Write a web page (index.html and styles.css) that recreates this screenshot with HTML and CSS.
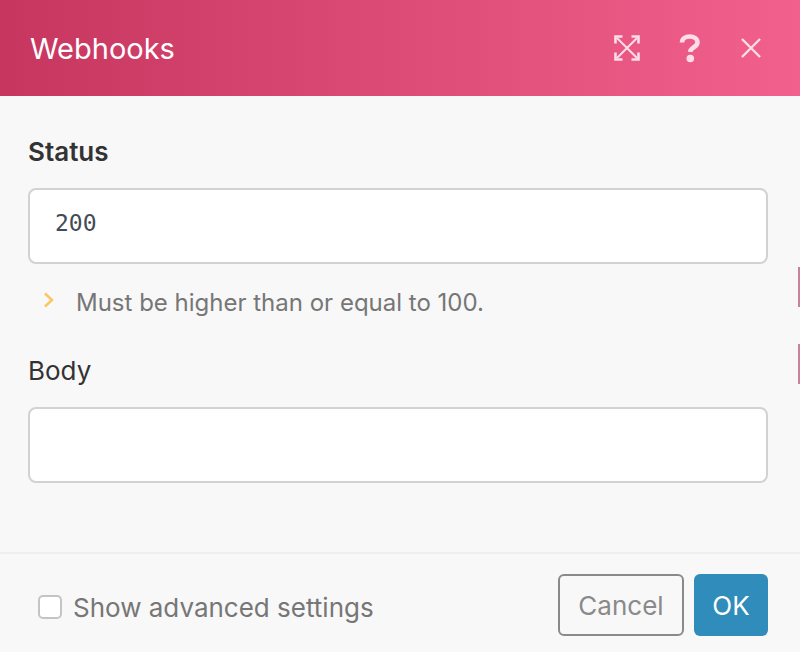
FILE: index.html
```html
<!DOCTYPE html>
<html lang="en">
<head>
<meta charset="utf-8">
<title>Webhooks</title>
<link rel="stylesheet" href="styles.css">
</head>
<body>
<div class="dialog">
  <header class="header">
    <h1 class="title">Webhooks</h1>
    <div class="tools">
      <svg class="icon" width="26" height="26" viewBox="0 0 26 26" fill="none" stroke="#fcdde8" stroke-width="2.6">
        <path d="M1.5 8.5V1.5H8.5M17.5 1.5H24.5V8.500M24.500 17.500V24.500H17.500M8.500 24.500H1.500V17.500"/>
        <path stroke-width="2" d="M3 3L23 23M23 3L3 23"/>
      </svg>
      <svg class="icon" width="22" height="30" viewBox="0 0 22 30" fill="none">
        <path d="M3 9.500C3 5.500 6.500 3.500 10.500 3.500C15 3.500 18.500 5.800 18.500 9.500C18.500 14 13 14 11.500 17.500V19" stroke="#fcdde8" stroke-width="4.600"/>
        <circle cx="11.300" cy="25.500" r="3.800" fill="#fcdde8"/>
      </svg>
      <svg class="icon" width="20" height="20" viewBox="0 0 20 20" fill="none" stroke="#fcdde8" stroke-width="2.400">
        <path d="M1 1L19 19M19 1L1 19"/>
      </svg>
    </div>
  </header>
  <main class="content">
    <section class="field">
      <label class="label label-strong">Status</label>
      <div class="input input-mono">200</div>
      <p class="hint">
        <svg class="chevron" width="12" height="16" viewBox="0 0 12 16" fill="none" stroke="#fdc55d" stroke-width="2.400"><path d="M2 1.500L9 8L2 14.500"/></svg>
        <span>Must be higher than or equal to 100.</span>
      </p>
    </section>
    <section class="field field-body">
      <label class="label">Body</label>
      <div class="input"></div>
    </section>
  </main>
  <footer class="footer">
    <label class="check">
      <span class="box"></span>
      <span>Show advanced settings</span>
    </label>
    <div class="actions">
      <button class="btn btn-cancel">Cancel</button>
      <button class="btn btn-ok">OK</button>
    </div>
  </footer>
  <span class="edge edge-one"></span>
  <span class="edge edge-two"></span>
</div>
</body>
</html>
```
FILE: styles.css
```css
* { box-sizing: border-box; }
html, body { margin: 0; padding: 0; }
body {
  width: 800px;
  height: 652px;
  overflow: hidden;
  background: #f8f8f8;
  font-family: "Inter", "Liberation Sans", sans-serif;
}
.dialog {
  position: relative;
  width: 800px;
  height: 652px;
  display: flex;
  flex-direction: column;
}
.header {
  height: 96px;
  flex: none;
  padding: 0 39px 0 30px;
  display: flex;
  align-items: center;
  justify-content: space-between;
  background: linear-gradient(90deg, #c7365f 0%, #f2608d 100%);
}
.title {
  margin: 0;
  font-size: 29px;
  font-weight: 400;
  color: #fff;
}
.tools {
  display: flex;
  align-items: center;
  gap: 0;
}
.icon { display: block; flex: none; }
.icon:nth-child(2) { margin-left: 39px; }
.icon:nth-child(3) { margin-left: 40px; }
.content {
  flex: 1;
  padding: 0 32px 0 28px;
}
.field { display: flex; flex-direction: column; }
.label {
  height: 92px;
  padding-top: 38px;
  font-size: 26px;
  line-height: 36px;
  color: #333;
}
.label-strong { font-weight: 600; }
.field-body .label { height: 60px; padding-top: 0; margin-top: 0; line-height: 48px; }
.field-body { margin-top: 27px; }
.input {
  height: 76px;
  background: #fff;
  border: 2px solid #d2d2d2;
  border-radius: 8px;
  padding: 0 25px;
  display: flex;
  align-items: center;
  color: #434b55;
  font-size: 24px;
}
.input-mono {
  font-family: "DejaVu Sans Mono", "Liberation Mono", monospace;
  font-size: 23px;
  padding-bottom: 7px;
}
.hint {
  margin: 20px 0 0;
  height: 36px;
  padding-left: 15px;
  display: flex;
  align-items: center;
  gap: 21px;
  font-size: 24px;
  color: #767676;
}
.chevron { display: block; flex: none; margin-top: -4px; }
.footer {
  flex: none;
  height: 100px;
  border-top: 2px solid #eeeeee;
  padding: 20px 32px 0 38px;
  display: flex;
  justify-content: space-between;
}
.check {
  display: flex;
  align-items: center;
  height: 66px;
  gap: 11px;
  font-size: 26px;
  color: #767676;
}
.box {
  width: 24px;
  height: 24px;
  background: #fff;
  border: 2px solid #c4c4c4;
  border-radius: 5px;
  flex: none;
}
.actions { display: flex; gap: 10px; }
.btn {
  height: 62px;
  border-radius: 6px;
  font-family: inherit;
  font-size: 26px;
  padding: 0;
}
.btn-cancel {
  width: 126px;
  background: transparent;
  border: 2px solid #8a8a8a;
  color: #8a8a8a;
}
.btn-ok {
  width: 74px;
  background: #2f8cbb;
  border: 0;
  color: #fff;
}
.edge {
  position: absolute;
  right: 0;
  width: 2px;
  height: 40px;
  background: #c9829e;
}
.edge-one { top: 267px; }
.edge-two { top: 344px; }
```
